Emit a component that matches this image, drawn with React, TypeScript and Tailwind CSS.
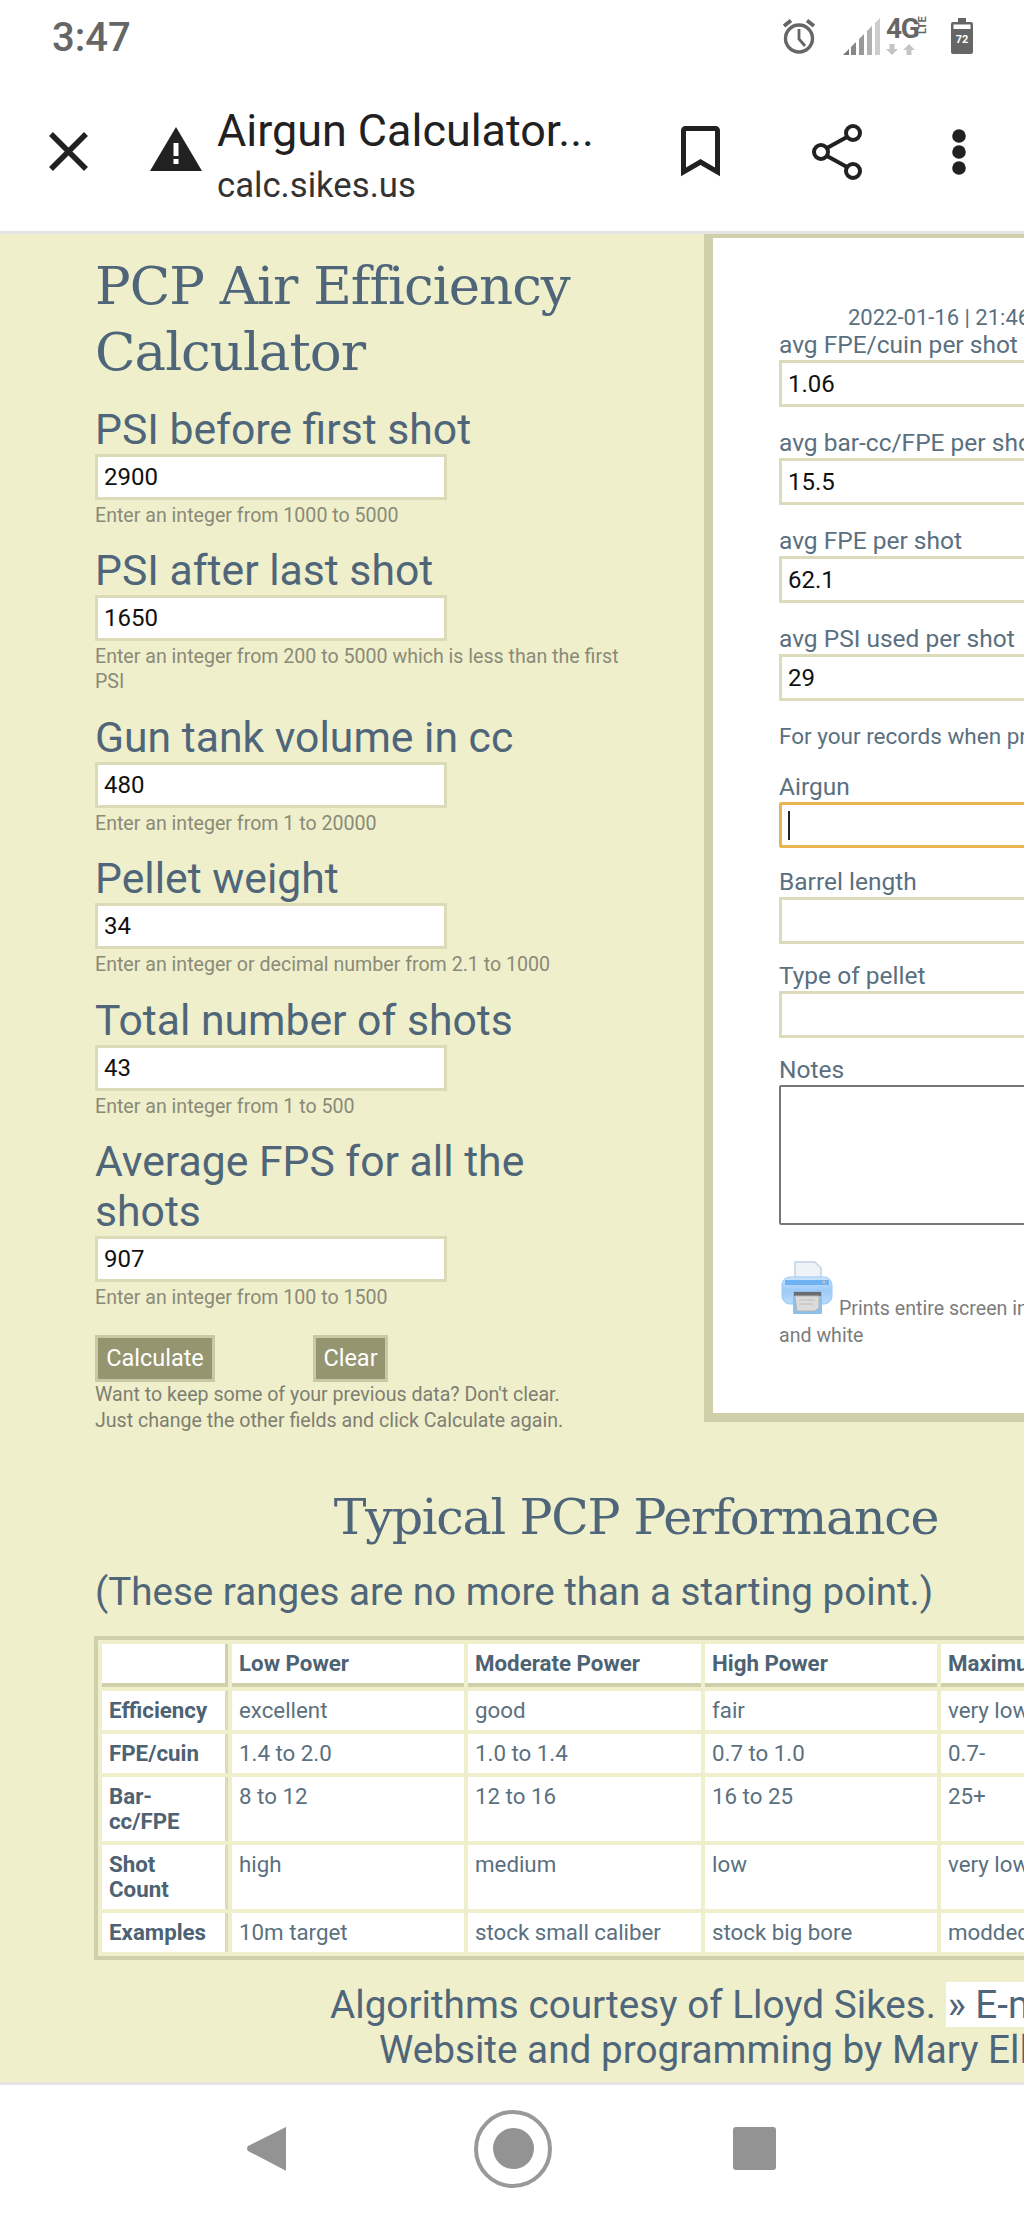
import React from "react";

function Field({ label, value, hint }: { label: React.ReactNode; value: string; hint: React.ReactNode }) {
  return (
    <div className="mb-[17.4px]">
      <div className="text-[42.7px] leading-[50px] text-[#4f667a]">{label}</div>
      <input
        readOnly
        value={value}
        className="block h-[46px] w-[352px] border-[3px] border-[#dbdbb8] bg-white pl-[6px] text-[24px] text-[#111] outline-none"
      />
      <div className="mt-[3px] text-[19.6px] leading-[25px] text-[#8a8a78]">{hint}</div>
    </div>
  );
}

function ResultField({ label, value, mb }: { label: string; value?: string; mb: string }) {
  return (
    <div className={mb}>
      <div className="text-[24.5px] leading-[30px] text-[#5a7080] whitespace-nowrap">{label}</div>
      <input
        readOnly
        value={value ?? ""}
        className="block h-[47px] w-[600px] border-[3px] border-[#dcdcbc] bg-white pl-[6px] text-[24px] text-[#111] outline-none"
      />
    </div>
  );
}

function PrinterIcon() {
  return (
    <svg width="52" height="54" viewBox="0 0 52 54" className="ml-[2px] inline-block align-baseline">
      <defs>
        <linearGradient id="printerBody" x1="0" y1="0" x2="0" y2="1">
          <stop offset="0" stopColor="#cfe6fc" />
          <stop offset="0.5" stopColor="#9ccaf9" />
          <stop offset="1" stopColor="#b9dbfb" />
        </linearGradient>
      </defs>
      <path d="M14 1h20l6 6v16H14z" fill="#eef3f8" stroke="#c4d2e4" strokeWidth="1.5" />
      <rect x="1" y="16" width="50" height="27" rx="8" fill="url(#printerBody)" stroke="#9cc8f5" strokeWidth="1" />
      <rect x="4" y="19" width="44" height="5" fill="#6db2f2" />
      <rect x="12" y="30" width="29" height="23" rx="1" fill="#8cc1ef" />
      <rect x="13" y="31" width="27" height="4" fill="#6b6c70" />
      <path d="M14 35h24v12l-4 3H16z" fill="#dcdcdc" stroke="#b4b4b4" strokeWidth="1" />
      <path d="M18 39h16M18 43h14" stroke="#bcbcbc" strokeWidth="1" />
      <circle cx="43" cy="21" r="1.5" fill="#e8b0a8" />
    </svg>
  );
}

function StatusBar() {
  return (
    <div className="flex h-[72px] items-center justify-between pl-[52px] pr-[51px]">
      <div className="pt-[3px] text-[40px] font-medium leading-[69px] text-[#666666]">3:47</div>
      <div className="flex items-center">
        <svg width="34" height="36" viewBox="0 0 34 36" fill="none" stroke="#666" strokeWidth="3.4">
          <circle cx="17" cy="20.5" r="13.5" />
          <path d="M17 11v10l6 7" strokeWidth="2.8" />
          <path d="M2 8l7-5.500M32 8l-7-5.500" strokeWidth="3.800" />
        </svg>
        <svg width="37" height="37" viewBox="0 0 37 37" className="ml-[27px]">
          <path d="M0 37l6-6v6z" fill="#777" />
          <path d="M8 29l5-5v13H8z" fill="#888" />
          <path d="M16 21l5-5v21h-5z" fill="#999" />
          <path d="M24 13l5-5v29h-5z" fill="#b0b0b0" />
          <path d="M32 5l5-5v37h-5z" fill="#cdcdcd" />
        </svg>
        <div className="ml-[6px] flex h-[37px] w-[42px] flex-col">
          <div className="flex h-[21px] items-start">
            <span className="w-[31px] whitespace-nowrap text-[28px] font-bold leading-[21px] tracking-[-1.2px] text-[#666]">4G</span>
            <span className="mt-[5px] block h-[11px] w-[11px] origin-center -rotate-90 whitespace-nowrap text-center text-[11px] font-bold leading-[11px] text-[#666]">
              LTE
            </span>
          </div>
          <svg width="31" height="11" viewBox="0 0 31 11" className="mt-[5px]">
            <path d="M6 11L0 5h3.500V0h5v5H12zM23 0l6 6h-3.500v5h-5V6H17z" fill="#c4c4c4" />
          </svg>
        </div>
        <svg width="22" height="36" viewBox="0 0 22 36" className="ml-[23px]">
          <path d="M7 0h8v4h5a2 2 0 0 1 2 2v28a2 2 0 0 1-2 2H2a2 2 0 0 1-2-2V6a2 2 0 0 1 2-2h5z" fill="#666" />
          <rect x="2.5" y="6.500" width="17" height="4.500" fill="#fff" />
          <text x="11" y="25" textAnchor="middle" fontSize="11" fontWeight="700" fill="#fff" fontFamily="Roboto, sans-serif">
            72
          </text>
        </svg>
      </div>
    </div>
  );
}

function Toolbar() {
  return (
    <div className="flex h-[162px] items-center border-b-[3px] border-[#e4e4e4] pl-[49px]">
      <svg width="39" height="39" viewBox="0 0 39 39" className="shrink-0">
        <path d="M2 2l35 35M37 2L2 37" stroke="#212121" strokeWidth="5.500" />
      </svg>
      <svg width="52" height="44" viewBox="0 0 52 44" className="ml-[62px] mt-[-5px] shrink-0">
        <path d="M26 0l26 44H0z" fill="#212121" />
        <rect x="23.5" y="16" width="5" height="13" fill="#fff" />
        <rect x="23.5" y="32" width="5" height="5" fill="#fff" />
      </svg>
      <div className="ml-[15px] mt-[12px] w-[464px] shrink-0">
        <div className="text-[44.9px] leading-[55px] text-[#212121]">Airgun Calculator...</div>
        <div className="text-[34.7px] leading-[55px] text-[#333]">calc.sikes.us</div>
      </div>
      <svg width="39" height="51" viewBox="0 0 39 51" fill="none" stroke="#212121" strokeWidth="5" className="shrink-0">
        <path d="M2.500 4.500a2 2 0 0 1 2-2h30a2 2 0 0 1 2 2v41.500L19.500 36 2.500 46z" />
      </svg>
      <svg width="52" height="56" viewBox="0 0 52 56" fill="none" stroke="#212121" strokeWidth="4" className="ml-[92px] shrink-0">
        <circle cx="41" cy="9" r="7" />
        <circle cx="9" cy="28" r="7" />
        <circle cx="41" cy="47" r="7" />
        <path d="M15 24l20-11M15 32l20 11" />
      </svg>
      <svg width="14" height="46" viewBox="0 0 14 46" className="ml-[88px] shrink-0" fill="#212121">
        <circle cx="7" cy="7" r="6.800" />
        <circle cx="7" cy="23" r="6.800" />
        <circle cx="7" cy="39" r="6.800" />
      </svg>
    </div>
  );
}

const rows: { head: React.ReactNode; cells: string[] }[] = [
  { head: "Efficiency", cells: ["excellent", "good", "fair", "very low"] },
  { head: "FPE/cuin", cells: ["1.4 to 2.0", "1.0 to 1.4", "0.7 to 1.0", "0.7-"] },
  { head: "Bar-cc/FPE", cells: ["8 to 12", "12 to 16", "16 to 25", "25+"] },
  { head: "Shot Count", cells: ["high", "medium", "low", "very low"] },
  { head: "Examples", cells: ["10m target", "stock small caliber", "stock big bore", "modded"] },
];

function PerfTable() {
  const th = "border-b-[4px] border-[#cfcfa9] bg-white px-[7px] py-[7px] text-left align-top font-bold text-[#4d6272]";
  return (
    <table className="ml-[94px] mt-[19px] w-[1088px] table-fixed border-separate border-spacing-1 border-[4px] border-[#cfcfa9] text-[22.3px] leading-[25px] text-[#5a7080]">
      <colgroup>
        <col className="w-[126px]" />
        <col className="w-[232px]" />
        <col className="w-[233px]" />
        <col className="w-[232px]" />
        <col className="w-[233px]" />
      </colgroup>
      <thead>
        <tr>
          <th className={`${th} border-r-[3px]`}></th>
          <th className={th}>Low Power</th>
          <th className={th}>Moderate Power</th>
          <th className={th}>High Power</th>
          <th className={th}>Maximum Power</th>
        </tr>
      </thead>
      <tbody>
        {rows.map((r, i) => (
          <tr key={i}>
            <th className="border-r-[3px] border-[#dbdbb8] bg-white px-[7px] py-[7px] text-left align-top font-bold text-[#4d6272]">
              {r.head}
            </th>
            {r.cells.map((c, j) => (
              <td key={j} className="whitespace-nowrap bg-white px-[7px] py-[7px] align-top">
                {c}
              </td>
            ))}
          </tr>
        ))}
      </tbody>
    </table>
  );
}

function NavBar() {
  return (
    <div className="flex h-[136px] items-center border-t-[3px] border-[#e4e4e4] bg-white pb-[6px] pl-[247px]">
      <svg width="39" height="45" viewBox="0 0 39 45" className="shrink-0">
        <path d="M38 1.500c1-1.300 1-.9 1 .8v40.400c0 1.700-.4 2.300-1.500 1.200L1 25c-1.300-1.500-1.300-3.500 0-5z" fill="#939393" />
      </svg>
      <div className="ml-[188px] flex h-[78px] w-[78px] shrink-0 items-center justify-center rounded-full border-[4px] border-[#999999]">
        <div className="h-[41px] w-[41px] rounded-full bg-[#939393]" />
      </div>
      <div className="ml-[181px] h-[43px] w-[43px] shrink-0 rounded-[3px] bg-[#939393]" />
    </div>
  );
}

export default function App() {
  return (
    <div className="flex h-[2218px] w-[1024px] flex-col overflow-hidden bg-white font-['Roboto',sans-serif]">
      <StatusBar />
      <Toolbar />
      <main className="flex-1 overflow-hidden bg-[#efefcb]">
        <div className="flex">
          <div className="w-[704px] shrink-0 pl-[95px]">
            <div className="w-[528px]">
              <h1 className="mb-[19px] pt-[19px] font-['DejaVu_Serif',serif] text-[53px] leading-[66px] tracking-[-1px] text-[#4f667a]">
                PCP Air Efficiency Calculator
              </h1>
              <Field label="PSI before first shot" value="2900" hint="Enter an integer from 1000 to 5000" />
              <Field label="PSI after last shot" value="1650" hint="Enter an integer from 200 to 5000 which is less than the first PSI" />
              <Field label="Gun tank volume in cc" value="480" hint="Enter an integer from 1 to 20000" />
              <Field label="Pellet weight" value="34" hint="Enter an integer or decimal number from 2.1 to 1000" />
              <Field label="Total number of shots" value="43" hint="Enter an integer from 1 to 500" />
              <Field label="Average FPS for all the shots" value="907" hint="Enter an integer from 100 to 1500" />
              <div className="mt-[25px] flex">
                <button className="h-[47px] w-[120px] border-[3px] border-[#c9c9a3] bg-[#959570] text-[23.5px] text-white">Calculate</button>
                <button className="ml-[98px] h-[47px] w-[75px] border-[3px] border-[#c9c9a3] bg-[#959570] text-[23.5px] text-white">Clear</button>
              </div>
              <div className="text-[19.6px] leading-[26px] text-[#7e7e72]">
                Want to keep some of your previous data? Don't clear.
                <br />
                Just change the other fields and click Calculate again.
              </div>
            </div>
          </div>
          <div className="h-[1188px] w-[500px] shrink-0 border-[9px] border-t-[4px] border-[#cfcfa9] bg-white pl-[66px] pt-[67px]">
            <div className="ml-[69px] whitespace-nowrap text-[22px] leading-[25px] text-[#5a7080]">2022-01-16 | 21:46</div>
            <ResultField label="avg FPE/cuin per shot" value="1.06" mb="mb-[21px]" />
            <ResultField label="avg bar-cc/FPE per shot" value="15.5" mb="mb-[21px]" />
            <ResultField label="avg FPE per shot" value="62.1" mb="mb-[21px]" />
            <ResultField label="avg PSI used per shot" value="29" mb="mb-[20px]" />
            <div className="mb-[21px] whitespace-nowrap text-[22.5px] leading-[30px] text-[#5a7080]">For your records when printing:</div>
            <div className="mb-[19px]">
              <div className="text-[24.5px] leading-[30px] text-[#5a7080]">Airgun</div>
              <div className="flex h-[46px] w-[600px] items-center rounded-[2px] border-[3px] border-[#e8b54e] bg-white pl-[6px]">
                <span className="block h-[29px] w-[2px] bg-[#222]" />
              </div>
            </div>
            <ResultField label="Barrel length" mb="mb-[17px]" />
            <ResultField label="Type of pellet" mb="mb-[17px]" />
            <div>
              <div className="text-[24.5px] leading-[30px] text-[#5a7080]">Notes</div>
              <div className="h-[140px] w-[600px] rounded-[2px] border-[2px] border-[#777] bg-white" />
            </div>
            <div className="mt-[36px] w-[430px] text-[19.6px] leading-[27px] text-[#7c7c7c]">
              <PrinterIcon /> <span className="ml-[1px]">Prints entire screen in black</span>
              <br />
              and white
            </div>
          </div>
        </div>
        <h2 className="ml-[95px] mt-[51px] w-[1082px] text-center font-['DejaVu_Serif',serif] text-[49px] leading-[66px] tracking-[-1.2px] text-[#4f667a]">
          Typical PCP Performance
        </h2>
        <div className="ml-[95px] mt-[16px] whitespace-nowrap text-[38.6px] leading-[50px] text-[#4f667a]">
          (These ranges are no more than a starting point.)
        </div>
        <PerfTable />
        <div className="mt-[22px] whitespace-nowrap pl-[330px] text-[38.7px] leading-[45px] text-[#4f667a]">
          Algorithms courtesy of Lloyd Sikes. <span className="bg-white pl-[2px]">» E-mail Lloyd</span>
        </div>
        <div className="whitespace-nowrap pl-[379px] text-[38.7px] leading-[45px] text-[#4f667a]">
          Website and programming by Mary Ellen
        </div>
      </main>
      <NavBar />
    </div>
  );
}
